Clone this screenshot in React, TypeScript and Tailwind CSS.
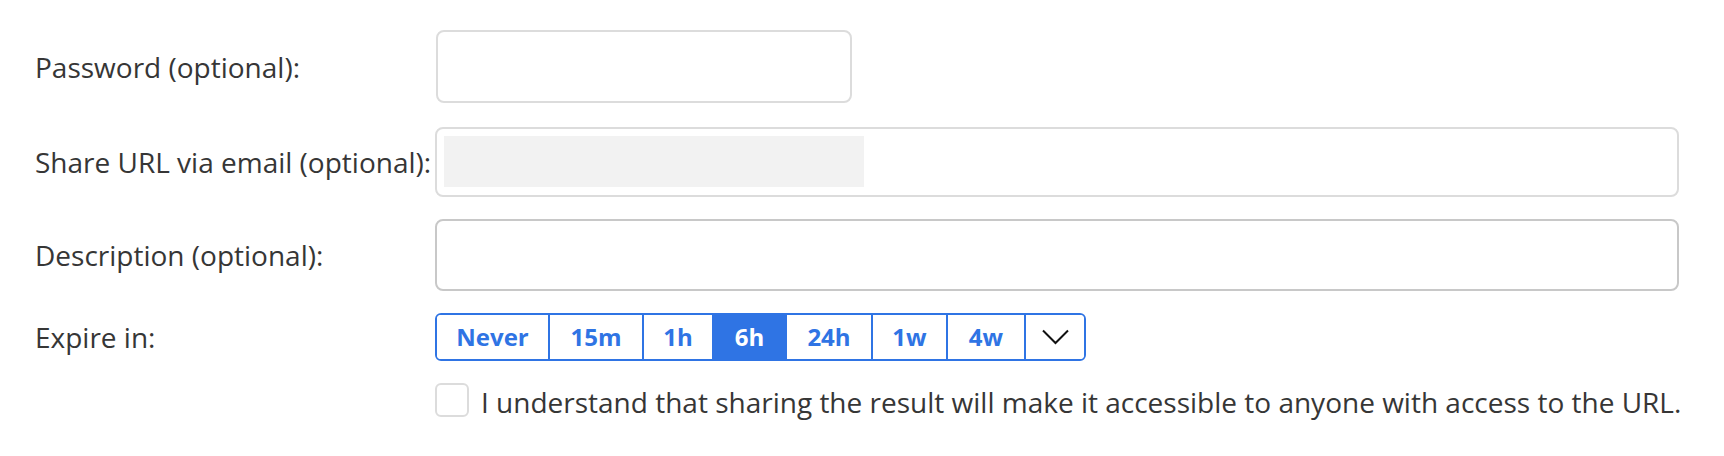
import React from "react";

const segments = [
  { label: "Never", w: "w-[111px]", active: false },
  { label: "15m", w: "w-[94px]", active: false },
  { label: "1h", w: "w-[70px]", active: false },
  { label: "6h", w: "w-[73px]", active: true },
  { label: "24h", w: "w-[86px]", active: false },
  { label: "1w", w: "w-[75px]", active: false },
  { label: "4w", w: "w-[78px]", active: false },
];

export default function App() {
  return (
    <div className="min-h-[456px] w-full bg-white pl-[35px] pr-[45px] pt-[30px] font-['Open_Sans',sans-serif] text-[28px] text-[#363636]">
      {/* Password */}
      <div className="flex h-[73px] items-center">
        <div className="w-[400px] shrink-0">Password (optional):</div>
        <div className="ml-[1px] h-[73px] w-[416px] rounded-[8px] border-2 border-[#dcdcdc] bg-white" />
      </div>

      {/* Share URL */}
      <div className="mt-[24px] flex h-[70px] items-center">
        <div className="w-[400px] shrink-0 whitespace-nowrap">Share URL via email (optional):</div>
        <div className="h-[70px] flex-1 rounded-[8px] border-2 border-[#dcdcdc] bg-white pl-[7px] pt-[7px]">
          <div className="h-[51px] w-[420px] bg-[#f2f2f2]" />
        </div>
      </div>

      {/* Description */}
      <div className="mt-[22px] flex h-[72px] items-center">
        <div className="w-[400px] shrink-0">Description (optional):</div>
        <div className="h-[72px] flex-1 rounded-[8px] border-2 border-[#c8c8c8] bg-white" />
      </div>

      {/* Expire */}
      <div className="mt-[22px] flex h-[48px] items-center">
        <div className="w-[400px] shrink-0">Expire in:</div>
        <div className="flex h-[48px] overflow-hidden rounded-[6px] border-2 border-[#2f74e4]">
          {segments.map((s, i) => (
            <div
              key={s.label}
              className={`flex h-full items-center justify-center text-[24px] font-bold ${s.w} ${
                i > 0 ? "border-l-2 border-[#2f74e4]" : ""
              } ${s.active ? "bg-[#2f74e4] text-white" : "bg-white text-[#2f74e4]"}`}
            >
              {s.label}
            </div>
          ))}
          <div className="flex h-full w-[60px] items-center justify-center border-l-2 border-[#2f74e4] bg-white">
            <svg width="27" height="16" viewBox="0 0 27 16" fill="none">
              <polyline points="1,1.5 13.5,14 26,1.5" stroke="#111" strokeWidth="2" fill="none" />
            </svg>
          </div>
        </div>
      </div>

      {/* Checkbox */}
      <div className="mt-[22px] flex items-start">
        <div className="ml-[400px] h-[34px] w-[34px] shrink-0 rounded-[6px] border-2 border-[#dcdcdc] bg-white" />
        <div className="ml-[12px] leading-[38px] whitespace-nowrap">
          I understand that sharing the result will make it accessible to anyone with access to the URL.
        </div>
      </div>
    </div>
  );
}
